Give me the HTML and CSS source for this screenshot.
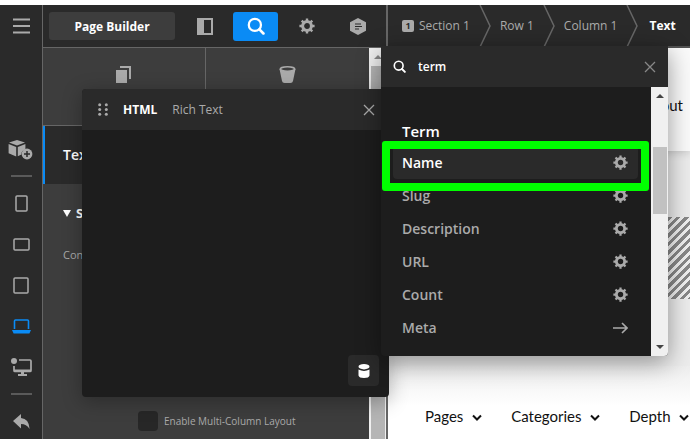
FILE: index.html
```
<!DOCTYPE html>
<html lang="en">
<head>
    <meta charset="UTF-8">
    <meta name="viewport" content="width=device-width, initial-scale=1.0">
    <title>Page Builder</title>
    <link rel="stylesheet" href="styles.css">
</head>
<body>

    <!-- Shared icons -->
    <svg class="sprite" width="0" height="0">
        <symbol id="gear" viewBox="0 0 16 16">
            <circle cx="8" cy="8" r="4.4" fill="none" stroke="currentColor" stroke-width="3"/>
            <path d="M8 .4v3M8 12.6v3M.4 8h3M12.6 8h3M2.7 2.7l2 2M11.3 11.3l2 2M13.3 2.7l-2 2M4.7 11.3l-2 2" stroke="currentColor" stroke-width="2.4"/>
        </symbol>
        <symbol id="search" viewBox="0 0 16 16">
            <circle cx="7" cy="7" r="5.4" fill="none" stroke="currentColor" stroke-width="2"/>
            <path d="M11 11l3.6 3.6" stroke="currentColor" stroke-width="2.4" stroke-linecap="round"/>
        </symbol>
        <symbol id="close" viewBox="0 0 12 12">
            <path d="M1 1l10 10M11 1L1 11" stroke="currentColor" stroke-width="1.3"/>
        </symbol>
        <symbol id="chevron" viewBox="0 0 10 8">
            <path d="M1 1.5l4 4 4-4" fill="none" stroke="currentColor" stroke-width="2"/>
        </symbol>
        <symbol id="separator" viewBox="0 0 12 42">
            <path d="M1 0l10 21L1 42" fill="none" stroke="currentColor" stroke-width="1.5"/>
        </symbol>
    </svg>

    <div class="app">
        <nav class="rail">
            <button class="rail-btn menu" aria-label="Menu">
                <svg width="17" height="16" viewBox="0 0 17 16"><path d="M0 1.5h17M0 8h17M0 14.5h17" stroke="currentColor" stroke-width="2"/></svg>
            </button>
            <button class="rail-btn" aria-label="Add element">
                <svg width="26" height="22" viewBox="0 0 26 22">
                    <path d="M9 1l8 2.6-8 3-8-3z" fill="currentColor"/>
                    <path d="M.6 5l7.6 3v9.4L.6 14.2zM17.4 5v5.4a5 5 0 0 0-4 5.2L9.8 17.2V8z" fill="currentColor"/>
                    <circle cx="19" cy="15" r="5.4" fill="currentColor"/>
                    <path d="M19 12v6M16 15h6" stroke="#2a2a2a" stroke-width="1.5"/>
                </svg>
            </button>
            <hr class="rail-line">
            <button class="rail-btn" aria-label="Phone">
                <svg width="13" height="17" viewBox="0 0 13 17"><rect x="1" y="1" width="11" height="15" rx="1" fill="none" stroke="currentColor" stroke-width="1.5"/></svg>
            </button>
            <button class="rail-btn" aria-label="Phone landscape">
                <svg width="17" height="13" viewBox="0 0 17 13"><rect x="1" y="1" width="15" height="11" rx="1" fill="none" stroke="currentColor" stroke-width="1.5"/></svg>
            </button>
            <button class="rail-btn" aria-label="Tablet">
                <svg width="16" height="17" viewBox="0 0 16 17"><rect x="1" y="1" width="14" height="15" rx="1" fill="none" stroke="currentColor" stroke-width="1.5"/></svg>
            </button>
            <button class="rail-btn active" aria-label="Laptop">
                <svg width="19" height="15" viewBox="0 0 19 15">
                    <path d="M2.5 10V2q0-1 1-1h12q1 0 1 1v8" fill="none" stroke="currentColor" stroke-width="1.6"/>
                    <path d="M0 11h19l-1.6 3.4H1.6z" fill="currentColor"/>
                </svg>
            </button>
            <button class="rail-btn" aria-label="Desktop">
                <svg width="21" height="19" viewBox="0 0 21 19">
                    <path d="M8 2h11q1 0 1 1v9.500q0 1-1 1H4q-1 0-1-1V8" fill="none" stroke="currentColor" stroke-width="1.7"/>
                    <path d="M3 11.500h17v2H3zM10 13h3v3h3v2H7v-2h3z" fill="currentColor"/>
                    <circle cx="3" cy="3" r="3" fill="currentColor"/>
                </svg>
            </button>
            <hr class="rail-line">
            <button class="rail-btn" aria-label="Back">
                <svg width="17" height="15" viewBox="0 0 17 15"><path d="M8 0v4q8 .5 8.600 11Q13.500 10 8 10v4.500L0 7z" fill="currentColor"/></svg>
            </button>
        </nav>

        <aside class="sidebar">
            <header class="toolbar">
                <button class="title-btn">Page Builder</button>
                <button class="tool" aria-label="Layout">
                    <svg width="16" height="17" viewBox="0 0 16 17"><rect x="1" y="1" width="14" height="15" fill="none" stroke="currentColor" stroke-width="2"/><path d="M1 1h6v15H1z" fill="currentColor"/></svg>
                </button>
                <button class="tool active" aria-label="Search"><svg width="18" height="18"><use href="#search"/></svg></button>
                <button class="tool" aria-label="Settings"><svg width="16" height="16"><use href="#gear"/></svg></button>
                <button class="tool" aria-label="Outline">
                    <svg width="16" height="17" viewBox="0 0 16 17"><path d="M8 0l8 4.300v8.400L8 17l-8-4.300V4.300z" fill="currentColor"/><path d="M5 6h6M5 8.500h7M5 11h4" stroke="#2a2a2a" stroke-width="1.200"/></svg>
                </button>
            </header>

            <div class="sidebar-body">
                <div class="inspector">
                    <div class="actions">
                        <button aria-label="Duplicate">
                            <svg width="16" height="17" viewBox="0 0 16 17"><path d="M0 4h11v13H0z" fill="currentColor"/><path d="M4 1h10v12" fill="none" stroke="currentColor" stroke-width="2"/></svg>
                        </button>
                        <button aria-label="Delete">
                            <svg width="17" height="17" viewBox="0 0 17 17"><path d="M.5 3L3 15q.4 2 2.500 2h6q2.100 0 2.500-2l2.500-12z" fill="currentColor"/><ellipse cx="8.500" cy="3" rx="7.200" ry="2.200" fill="#3d3d3d" stroke="currentColor" stroke-width="1.600"/></svg>
                        </button>
                    </div>
                    <h2 class="element-name">Text</h2>
                    <h3 class="group-name">
                        <svg width="8" height="7" viewBox="0 0 8 7"><path d="M0 0h8L4 7z" fill="currentColor"/></svg>
                        Setup
                    </h3>
                    <p class="field-label">Content</p>
                    <div class="check-row">
                        <input type="checkbox" id="multi-column">
                        <label for="multi-column">Enable Multi-Column Layout</label>
                    </div>
                </div>
                <div class="scrollbar sidebar-scroll">
                    <span class="arrow up"></span>
                    <span class="thumb"></span>
                </div>
            </div>
        </aside>

        <main class="preview">
            <ol class="breadcrumbs">
                <li><a href="#"><span class="badge">1</span>Section 1</a></li>
                <li><svg width="12" height="42"><use href="#separator"/></svg></li>
                <li><a href="#">Row 1</a></li>
                <li><svg width="12" height="42"><use href="#separator"/></svg></li>
                <li><a href="#">Column 1</a></li>
                <li><svg width="12" height="42"><use href="#separator"/></svg></li>
                <li class="last"><a href="#" class="current">Text</a></li>
            </ol>
            <div class="canvas">
                <div class="site-header"><a href="#">About</a></div>
                <div class="stripes"></div>
                <nav class="site-nav">
                    <a href="#">Pages <svg width="10" height="8"><use href="#chevron"/></svg></a>
                    <a href="#">Categories <svg width="10" height="8"><use href="#chevron"/></svg></a>
                    <a href="#">Depth <svg width="10" height="8"><use href="#chevron"/></svg></a>
                </nav>
            </div>
        </main>
    </div>

    <!-- Floating text editor -->
    <section class="editor">
        <header class="editor-head">
            <svg width="10" height="13" viewBox="0 0 10 13" fill="currentColor">
                <circle cx="1.700" cy="1.700" r="1.500"/><circle cx="8.300" cy="1.700" r="1.500"/>
                <circle cx="1.700" cy="6.500" r="1.500"/><circle cx="8.300" cy="6.500" r="1.500"/>
                <circle cx="1.700" cy="11.300" r="1.500"/><circle cx="8.300" cy="11.300" r="1.500"/>
            </svg>
            <button class="tab current">HTML</button>
            <button class="tab">Rich Text</button>
            <button class="close" aria-label="Close"><svg width="12" height="12"><use href="#close"/></svg></button>
        </header>
        <button class="data-btn" aria-label="Dynamic content">
            <svg width="12" height="14" viewBox="0 0 12 14" fill="currentColor"><ellipse cx="6" cy="2.700" rx="5.500" ry="2.700"/><path d="M.5 5.500Q6 8.300 11.500 5.500v6Q11 14 6 14T.5 11.500z"/></svg>
        </button>
    </section>

    <!-- Dynamic content picker -->
    <section class="picker">
        <div class="picker-search">
            <svg width="13" height="13"><use href="#search"/></svg>
            <input type="text" value="term" aria-label="Search dynamic content">
            <button class="close" aria-label="Clear"><svg width="12" height="12"><use href="#close"/></svg></button>
        </div>
        <div class="picker-body">
            <div class="picker-list">
                <h4>Term</h4>
                <button class="option selected">Name <svg width="15" height="15"><use href="#gear"/></svg></button>
                <button class="option">Slug <svg width="15" height="15"><use href="#gear"/></svg></button>
                <button class="option">Description <svg width="15" height="15"><use href="#gear"/></svg></button>
                <button class="option">URL <svg width="15" height="15"><use href="#gear"/></svg></button>
                <button class="option">Count <svg width="15" height="15"><use href="#gear"/></svg></button>
                <button class="option">Meta <svg width="15" height="12" viewBox="0 0 15 12"><path d="M0 6h14M9 1l5 5-5 5" fill="none" stroke="currentColor" stroke-width="1.600"/></svg></button>
            </div>
            <div class="scrollbar picker-scroll">
                <span class="arrow up"></span>
                <span class="thumb"></span>
                <span class="arrow down"></span>
            </div>
        </div>
        <div class="highlight"></div>
    </section>

</body>
</html>
```
FILE: styles.css
```
* {
    box-sizing: border-box;
}
body {
    margin: 0;
    height: 100vh;
    padding-top: 5px;
    overflow: hidden;
    background: #fff;
    color: #aaa;
    font-family: "Open Sans", "Noto Sans", sans-serif;
    font-size: 12px;
}
button {
    display: flex;
    align-items: center;
    justify-content: center;
    padding: 0;
    border: none;
    background: none;
    color: inherit;
    font: inherit;
    cursor: pointer;
}
a {
    color: inherit;
    text-decoration: none;
}
.sprite {
    position: absolute;
}
.app {
    display: flex;
    height: 100%;
}

/* Left icon rail */
.rail {
    display: flex;
    flex-direction: column;
    align-items: center;
    flex: none;
    width: 43px;
    background: #2a2a2a;
    border-right: 1px solid #666;
}
.rail-btn {
    flex: none;
    width: 41px;
    height: 41px;
}
.rail-btn.menu {
    margin-bottom: 83px;
}
.rail-btn.active {
    color: #0a8bf5;
}
.rail-line {
    flex: none;
    width: 21px;
    height: 2px;
    margin: 5px 0 6px;
    border: none;
    background: #5a5a5a;
}

/* Sidebar */
.sidebar {
    display: flex;
    flex-direction: column;
    flex: none;
    width: 345px;
    background: #3d3d3d;
    border-right: 2px solid #666;
}
.toolbar {
    display: flex;
    align-items: center;
    flex: none;
    height: 43px;
    padding: 0 0 0 6px;
    background: #2a2a2a;
    border-bottom: 1px solid #666;
}
.title-btn {
    flex: none;
    width: 126px;
    height: 28px;
    margin-right: 7px;
    border-radius: 3px;
    background: #3d3d3d;
    color: #fff;
    font-weight: 700;
}
.tool {
    flex: none;
    width: 45px;
    height: 29px;
    margin-right: 6px;
    border-radius: 3px;
}
.tool.active {
    background: #0a8bf5;
    color: #fff;
}
.sidebar-body {
    display: flex;
    flex: 1;
    min-height: 0;
}
.inspector {
    flex: 1;
    overflow: hidden;
}
.actions {
    display: grid;
    grid-template-columns: 1fr 1fr;
    height: 78px;
    border-bottom: 1px solid #666;
}
.actions button {
    align-items: flex-start;
    padding-top: 18px;
}
.actions button:first-child {
    border-right: 1px solid #666;
}
.element-name {
    height: 58px;
    margin: 0;
    padding-left: 18px;
    border-left: 2px solid #0a8bf5;
    background: #2a2a2a;
    color: #fff;
    font-size: 14px;
    font-weight: 600;
    line-height: 58px;
}
.group-name {
    display: flex;
    align-items: center;
    gap: 5px;
    height: 58px;
    margin: 0;
    padding-left: 20px;
    color: #fff;
    font-size: 13px;
}
.field-label {
    margin: 0 0 143px;
    padding-left: 20px;
    font-size: 11px;
    line-height: 26px;
}
.check-row {
    display: flex;
    align-items: center;
    gap: 6px;
    padding-left: 95px;
    font-size: 10px;
}
.check-row input {
    appearance: none;
    width: 20px;
    height: 20px;
    margin: 0;
    border-radius: 4px;
    background: #272727;
}

/* Scrollbars */
.scrollbar {
    display: flex;
    flex-direction: column;
    align-items: center;
    flex: none;
    width: 17px;
    background: #f0f0f0;
}
.arrow {
    border: 4px solid transparent;
}
.arrow.up {
    border-top: none;
    border-bottom-color: #444;
}
.arrow.down {
    border-bottom: none;
    border-top-color: #444;
}
.sidebar-scroll .up {
    margin: 7px 0;
    border-bottom-color: #888;
}
.thumb {
    width: 14px;
    background: #c1c1c1;
}
.sidebar-scroll .thumb {
    flex: 1;
    background: #b5b5b5;
}

/* Preview area */
.preview {
    display: flex;
    flex-direction: column;
    flex: 1;
    min-width: 0;
}
.breadcrumbs {
    display: flex;
    align-items: center;
    flex: none;
    height: 43px;
    margin: 0;
    padding: 0 0 0 14px;
    overflow: hidden;
    background: #2a2a2a;
    border-bottom: 2px solid #555;
    list-style: none;
    white-space: nowrap;
}
.breadcrumbs li {
    display: flex;
    align-items: center;
    height: 100%;
    margin-right: 9px;
}
.breadcrumbs .last {
    padding: 0 14px 0 2px;
    border-right: 1px solid #666;
}
.breadcrumbs svg {
    color: #666;
}
.breadcrumbs .current {
    color: #fff;
    font-weight: 700;
}
.badge {
    display: inline-block;
    width: 12px;
    margin-right: 5px;
    border-radius: 2px;
    background: #aaa;
    color: #2a2a2a;
    font-size: 9px;
    font-weight: 700;
    line-height: 12px;
    text-align: center;
    vertical-align: 1px;
}
.canvas {
    display: flex;
    flex-direction: column;
    flex: 1;
    background: #ececec;
    color: #111;
    font-family: Lato, sans-serif;
    font-size: 15px;
}
.site-header {
    display: flex;
    align-items: center;
    justify-content: flex-end;
    height: 103px;
    padding: 10px 7px 0 0;
    background: #fafafa;
    box-shadow: 0 2px 8px rgba(0, 0, 0, 0.15);
}
.stripes {
    height: 82px;
    margin: 66px 0 67px;
    background: repeating-linear-gradient(135deg, #888 0 3px, #f0f0f0 3px 6px);
}
.site-nav {
    display: flex;
    flex: 1;
    gap: 29px;
    padding: 41px 0 0 37px;
    overflow: hidden;
    background: linear-gradient(#eee, #fff 40px);
    white-space: nowrap;
}
.site-nav svg {
    margin-left: 5px;
}

/* Text editor window */
.editor {
    position: absolute;
    top: 89px;
    left: 82px;
    display: flex;
    flex-direction: column;
    width: 307px;
    height: 308px;
    border-radius: 4px;
    background: #1d1d1d;
    box-shadow: 0 4px 20px rgba(0, 0, 0, 0.3);
}
.editor-head {
    display: flex;
    align-items: center;
    gap: 15px;
    height: 41px;
    padding: 0 14px 0 16px;
    border-radius: 4px 4px 0 0;
    background: #2a2a2a;
}
.tab.current {
    color: #fff;
    font-weight: 700;
}
.editor .close {
    margin-left: auto;
}
.data-btn {
    width: 31px;
    height: 31px;
    margin: auto 10px 11px auto;
    border-radius: 4px;
    background: #2a2a2a;
    color: #fff;
}

/* Dynamic content picker */
.picker {
    position: absolute;
    top: 46px;
    left: 381px;
    width: 287px;
    border-radius: 4px;
    background: #1d1d1d;
    box-shadow: 0 6px 24px rgba(0, 0, 0, 0.4);
}
.picker-search {
    display: flex;
    align-items: center;
    height: 41px;
    padding: 0 12px;
    background: #2a2a2a;
    color: #fff;
}
.picker-search input {
    flex: 1;
    min-width: 0;
    padding: 0 12px;
    border: none;
    outline: none;
    background: none;
    color: #fff;
    font: inherit;
    font-weight: 600;
}
.picker-search .close {
    color: #888;
}
.picker-body {
    display: flex;
}
.picker-list {
    flex: 1;
    padding: 30px 13px 12px 12px;
    font-size: 14px;
}
.picker-list h4 {
    margin: 0;
    padding-left: 9px;
    color: #fff;
    font-size: 15px;
    font-weight: 600;
    line-height: 29px;
}
.option {
    justify-content: space-between;
    width: 100%;
    height: 33px;
    padding: 0 10px 0 9px;
    border-radius: 4px;
    font-weight: 600;
}
.option.selected {
    background: #2a2a2a;
    color: #fff;
}
.option svg {
    color: #aaa;
}
.picker-scroll {
    border-radius: 0 0 4px 0;
}
.picker-scroll .up {
    margin-top: 7px;
}
.picker-scroll .thumb {
    height: 67px;
    margin-top: 49px;
}
.picker-scroll .down {
    margin: auto 0 7px;
}
.highlight {
    position: absolute;
    top: 95px;
    left: 1px;
    width: 267px;
    height: 50px;
    border: 8px solid #0f0;
    border-radius: 3px;
    pointer-events: none;
}
```
